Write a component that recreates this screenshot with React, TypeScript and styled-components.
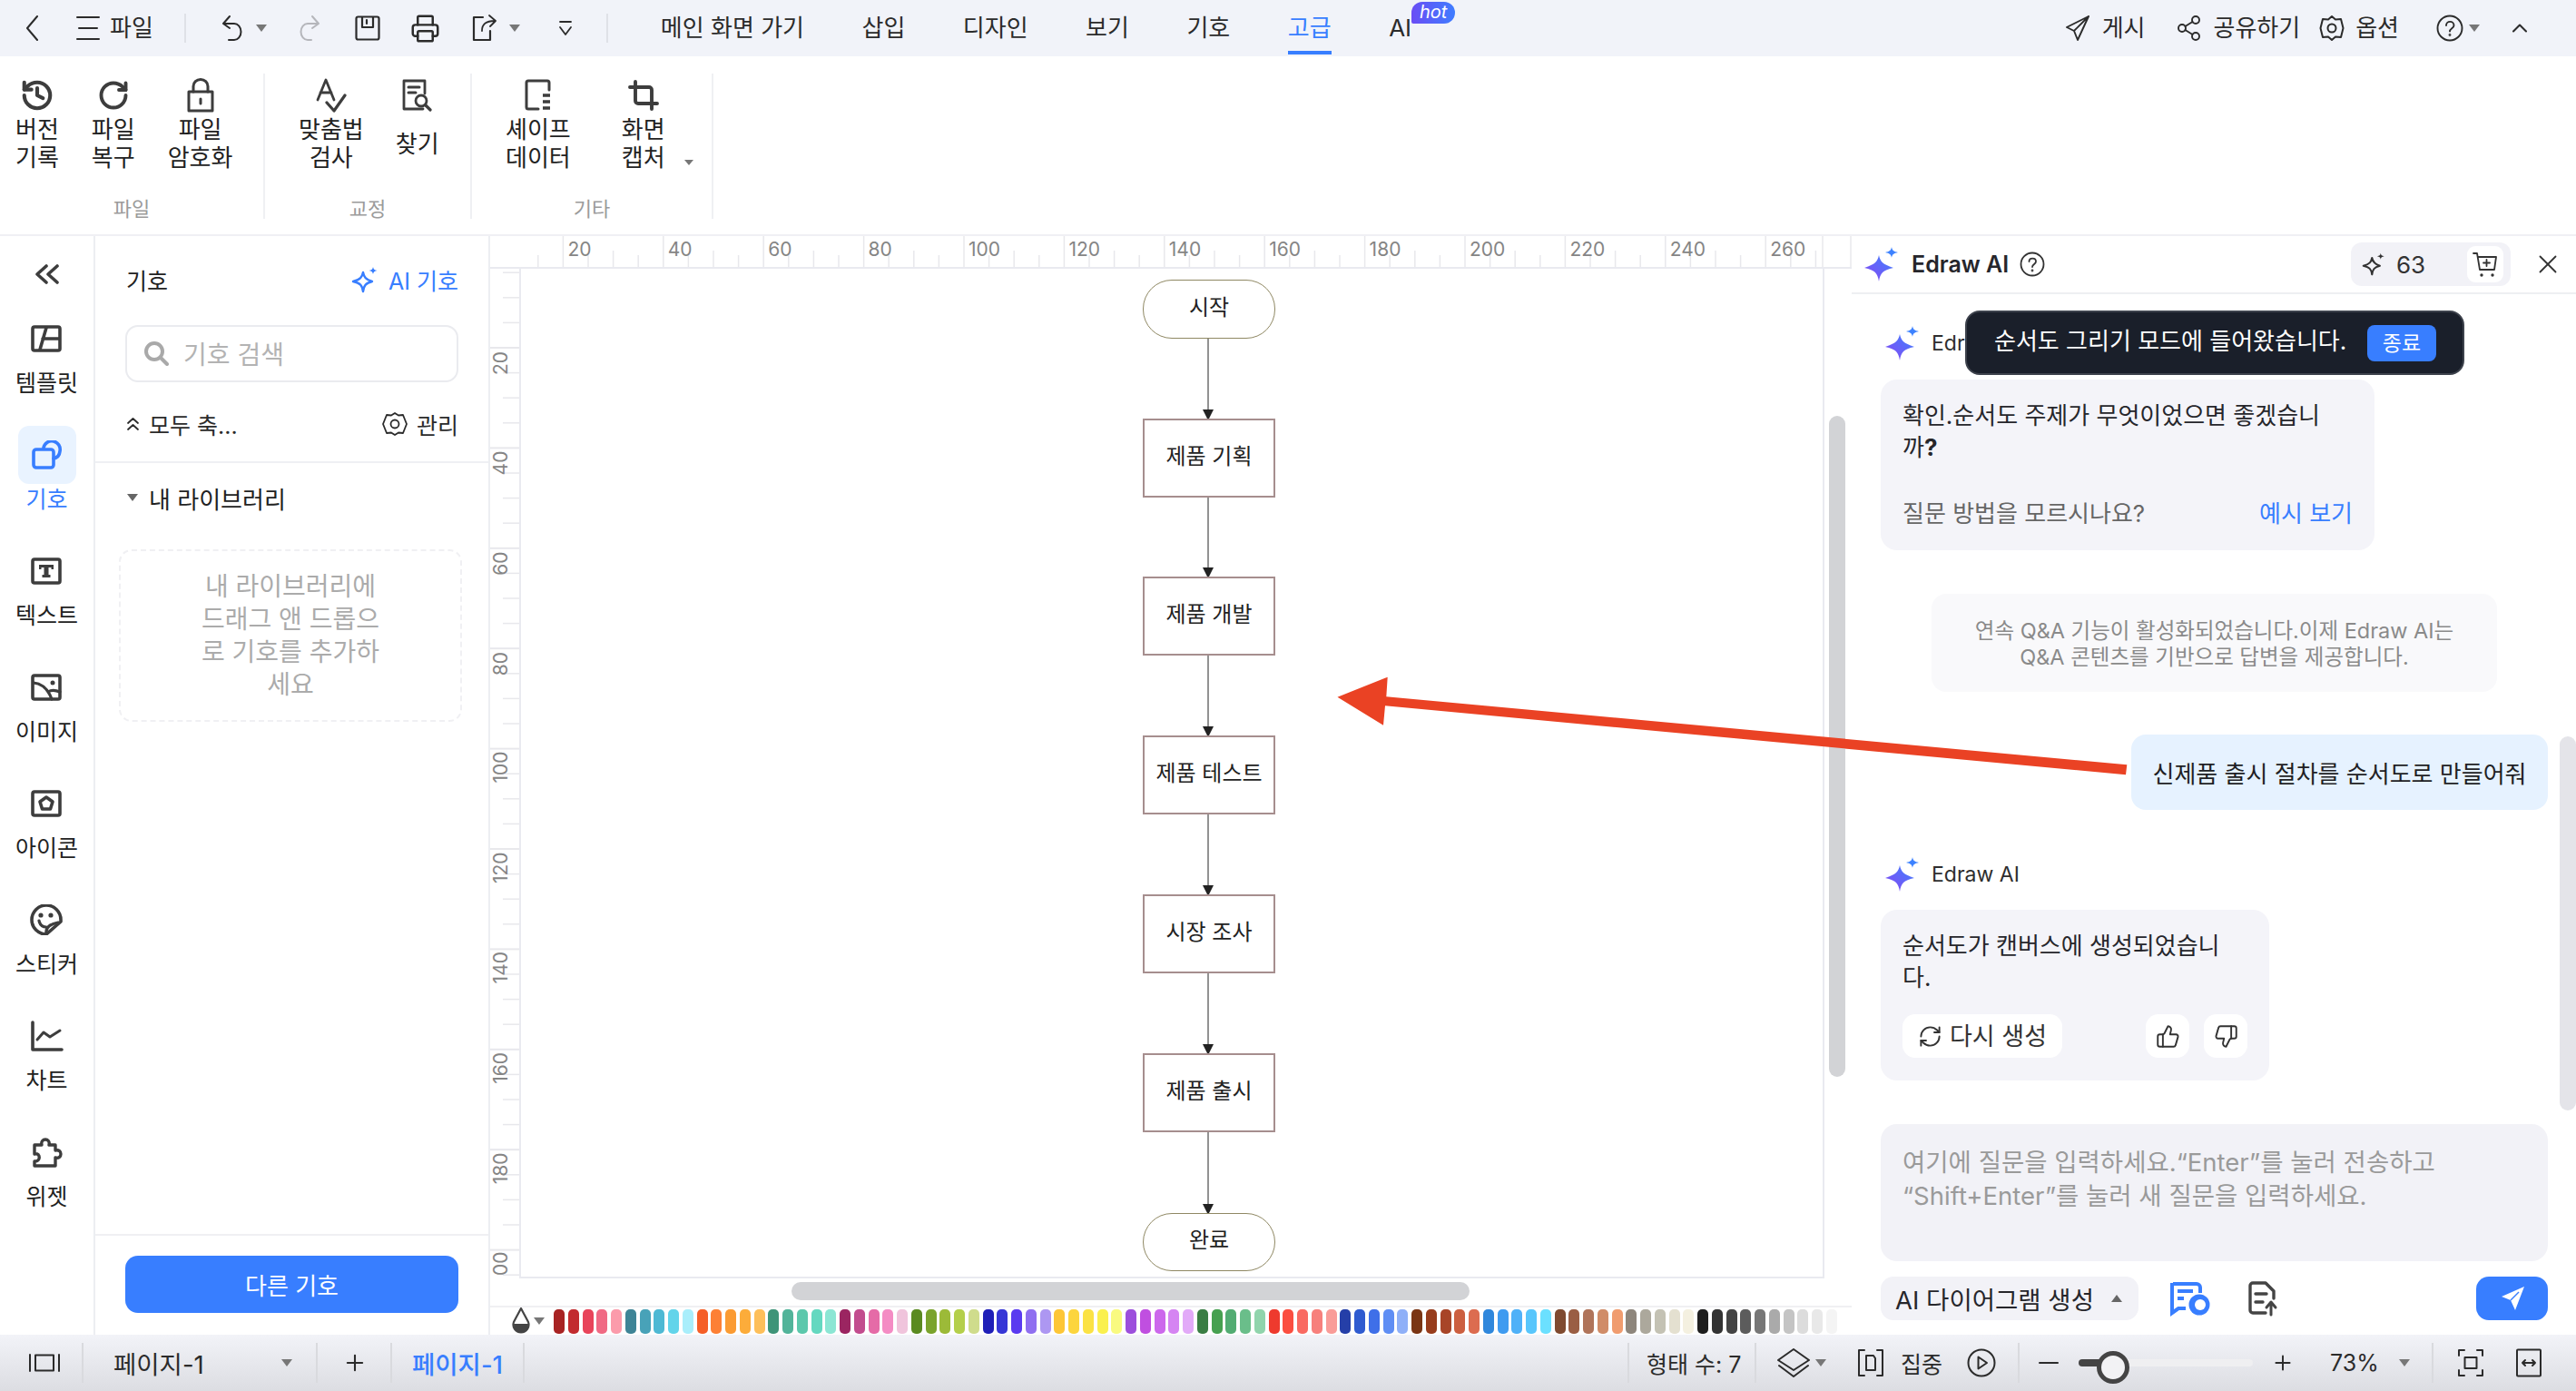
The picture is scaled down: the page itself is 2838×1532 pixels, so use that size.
import React from 'react'
import styled, { createGlobalStyle } from 'styled-components'
import { ChevronUp, Crop, History, Plus, Printer, RefreshCw, RotateCw, ThumbsDown, ThumbsUp, X } from 'lucide-react'

const GlobalStyle = createGlobalStyle`
  html, body {
    margin: 0;
    padding: 0;
    background: #fff;
  }
  body {
    font-family: Inter, "Noto Sans CJK KR", "Noto Sans", sans-serif;
    color: #222;
  }
  * {
    box-sizing: border-box;
  }
`

const Page = styled.div`
  position: relative;
  width: 2838px;
  height: 1532px;
  overflow: hidden;
  display: flex;
  flex-direction: column;
`

/* top menu */
const TopBar = styled.div`
  height: 62px;
  flex: none;
  display: flex;
  align-items: center;
  background: #f1f3f9;
  padding-left: 27px;
  color: #2b2b2b;
`

const TopSlot = styled.span<{ $ml?: number; $color?: string }>`
  display: inline-flex;
  align-items: center;
  margin-left: ${({ $ml }) => $ml || 0}px;
  color: ${({ $color }) => $color || 'inherit'};
  font-size: 26px;
  line-height: 32px;
  white-space: nowrap;
`

const TopSep = styled.span<{ $ml: number }>`
  width: 2px;
  height: 32px;
  margin-left: ${({ $ml }) => $ml}px;
  background: #dfe1e7;
`

const Caret = styled.span<{ $ml?: number; $up?: boolean; $color?: string }>`
  display: inline-block;
  flex: none;
  width: 0;
  height: 0;
  margin-left: ${({ $ml }) => $ml || 0}px;
  border-left: 6px solid transparent;
  border-right: 6px solid transparent;
  ${({ $up, $color }) =>
    $up ? `border-bottom: 8px solid ${$color || '#777'};` : `border-top: 8px solid ${$color || '#777'};`}
`

const NavTabs = styled.div`
  display: flex;
  gap: 63.5px;
  margin-left: 58px;
`

const NavTab = styled.div<{ $active?: boolean }>`
  position: relative;
  font-size: 26px;
  line-height: 62px;
  height: 62px;
  white-space: nowrap;
  color: ${({ $active }) => ($active ? '#387eff' : '#2b2b2b')};

  ${({ $active }) =>
    $active &&
    `&::after {
      content: '';
      position: absolute;
      left: 0;
      right: 0;
      bottom: 2px;
      height: 4px;
      background: #387eff;
    }`}
`

const HotBadge = styled.span`
  position: absolute;
  left: 25px;
  top: 2px;
  width: 48px;
  height: 24px;
  border-radius: 12px 12px 12px 2px;
  background: linear-gradient(90deg, #6a4df5, #3f7dff);
  color: #fff;
  font-size: 20px;
  line-height: 22px;
  text-align: center;
  font-style: italic;
`

const TopRight = styled.div`
  margin-left: auto;
  display: flex;
  align-items: center;
  padding-right: 48px;
`

/* ribbon */
const Ribbon = styled.div`
  height: 198px;
  flex: none;
  display: flex;
  background: #fff;
  border-bottom: 2px solid #f0f0f4;
`

const RibbonGroup = styled.div<{ $w: number; $pl: number; $gap: number }>`
  position: relative;
  width: ${({ $w }) => $w}px;
  height: 160px;
  margin-top: 19px;
  padding-left: ${({ $pl }) => $pl}px;
  border-right: 2px solid #eff0f3;
  display: flex;
  gap: ${({ $gap }) => $gap}px;
`

const RibbonItem = styled.div`
  position: relative;
  display: flex;
  flex-direction: column;
  align-items: center;
  padding-top: 6px;
  height: 130px;
  color: #3d3d3d;
`

const RibbonIcon = styled.div`
  width: 40px;
  height: 36px;
  display: flex;
  align-items: center;
  justify-content: center;
`

const RibbonLabel = styled.div`
  margin-top: 4px;
  color: #222;
  font-size: 26px;
  line-height: 31px;
  height: 62px;
  text-align: center;
  white-space: nowrap;
  display: flex;
  align-items: center;
`

const GroupName = styled.div`
  position: absolute;
  left: 0;
  right: 0;
  bottom: -3px;
  text-align: center;
  font-size: 22px;
  line-height: 28px;
  color: #9b9b9b;
`

const CaptureCaret = styled(Caret)`
  position: absolute;
  right: -31px;
  top: 95px;
  border-left-width: 5px;
  border-right-width: 5px;
  border-top-width: 6px;
`

/* main */
const Main = styled.div`
  flex: 1;
  display: flex;
  min-height: 0;
`

const Rail = styled.div`
  width: 105px;
  flex: none;
  border-right: 2px solid #eceef2;
  display: flex;
  flex-direction: column;
  align-items: center;
`

const CollapseBtn = styled.div`
  height: 81px;
  padding-top: 31px;
  color: #3d3d3d;
`

const RailItem = styled.div<{ $active?: boolean }>`
  height: 128px;
  display: flex;
  flex-direction: column;
  align-items: center;
  color: ${({ $active }) => ($active ? '#387eff' : '#3d3d3d')};
`

const RailIcon = styled.div<{ $active?: boolean }>`
  width: 64px;
  height: 64px;
  border-radius: 12px;
  display: flex;
  align-items: center;
  justify-content: center;
  background: ${({ $active }) => ($active ? '#e9f3ff' : 'transparent')};
`

const RailLabel = styled.div<{ $active?: boolean }>`
  font-size: 25px;
  line-height: 34px;
  color: ${({ $active }) => ($active ? '#387eff' : '#222')};
`

const Panel = styled.div`
  width: 435px;
  flex: none;
  display: flex;
  flex-direction: column;
  border-right: 2px solid #eceef2;
`

const PanelHead = styled.div`
  height: 98px;
  flex: none;
  padding: 0 33px 3px 34px;
  display: flex;
  align-items: center;
  justify-content: space-between;
  font-size: 25px;
`

const BlueLink = styled.span`
  display: inline-flex;
  align-items: center;
  gap: 11px;
  color: #387eff;
  font-size: 25px;
`

const SearchBox = styled.div`
  height: 63px;
  flex: none;
  margin: 0 33px 0 33px;
  padding: 0 0 2px 18px;
  border: 2px solid #eaebef;
  border-radius: 14px;
  display: flex;
  align-items: center;
  gap: 16px;
  color: #b3b3b3;
  font-size: 28px;
`

const ToolRow = styled.div`
  height: 89px;
  flex: none;
  padding: 5px 33px 0 34px;
  border-bottom: 2px solid #eff0f3;
  display: flex;
  align-items: center;
  justify-content: space-between;
  font-size: 25px;
`

const ToolSide = styled.span`
  display: inline-flex;
  align-items: center;
  gap: 10px;
  color: #2b2b2b;
`

const LibRow = styled.div`
  height: 82px;
  flex: none;
  padding: 0 0 6px 35px;
  display: flex;
  align-items: center;
  gap: 12px;
  font-size: 26px;
`

const DropZone = styled.div`
  width: 378px;
  height: 190px;
  flex: none;
  margin: 13px 0 0 26px;
  border: 2px dashed #f0f0f3;
  border-radius: 14px;
  display: flex;
  align-items: center;
  justify-content: center;
  text-align: center;
  color: #ababab;
  font-size: 28px;
  line-height: 36px;
`

const PanelFoot = styled.div`
  margin-top: auto;
  height: 111px;
  flex: none;
  padding: 22px 33px 0 33px;
  border-top: 2px solid #f0f0f3;
`

const PrimaryBtn = styled.div`
  height: 63px;
  border-radius: 14px;
  background: #387eff;
  color: #fff;
  font-size: 26px;
  display: flex;
  align-items: center;
  justify-content: center;
`

/* canvas column */
const CanvasCol = styled.div`
  width: 1500px;
  flex: none;
  display: flex;
  flex-direction: column;
`

const RulerTop = styled.div`
  height: 36px;
  flex: none;
  padding-left: 34px;
  border-bottom: 2px solid #e9eaf0;
  background: #fff;
`

const RulerSvg = styled.svg`
  display: block;
`

const WorkRow = styled.div`
  flex: 1;
  min-height: 0;
  display: flex;
`

const RulerLeft = styled.div`
  width: 34px;
  flex: none;
  overflow: hidden;
  border-right: 2px solid #e9eaf0;
`

const Sheet = styled.div`
  position: relative;
  width: 1436px;
  flex: none;
  background: #fff;
  border-right: 2px solid #e9eaf0;
  border-bottom: 2px solid #e9eaf0;
`

const VGutter = styled.div`
  flex: 1;
  padding: 162px 7px 0 5px;
`

const ScrollThumb = styled.div<{ $len: number; $horizontal?: boolean }>`
  background: #d2d3d6;
  border-radius: 10px;
  ${({ $len, $horizontal }) => ($horizontal ? `width: ${$len}px; height: 20px;` : `height: ${$len}px; width: 100%;`)}
`

const HGutter = styled.div`
  height: 30px;
  flex: none;
  padding: 4px 0 0 332px;
`

const Palette = styled.div`
  height: 32px;
  flex: none;
  border-top: 2px solid #f0f0f3;
  display: flex;
  align-items: center;
  padding-left: 23px;
`

const Swatches = styled.div`
  display: flex;
  gap: 3.75px;
  margin-left: 10px;
`

const Swatch = styled.span<{ $c: string }>`
  width: 12px;
  height: 27px;
  border-radius: 5px;
  background: ${({ $c }) => $c};
`

const Node = styled.div<{ $top: number; $h: number; $round?: boolean }>`
  position: absolute;
  left: 685px;
  top: ${({ $top }) => $top}px;
  width: 146px;
  height: ${({ $h }) => $h}px;
  background: #fff;
  display: flex;
  align-items: center;
  justify-content: center;
  padding-bottom: 9px;
  font-size: 24px;
  color: #222;
  border: ${({ $round }) => ($round ? '1.5px solid #8f8863' : '2px solid #a68e8e')};
  border-radius: ${({ $round }) => ($round ? '32px' : '0')};
`

const Wires = styled.svg`
  position: absolute;
  left: 0;
  top: 0;
`

/* AI panel */
const AiPanel = styled.div`
  position: relative;
  flex: 1;
  min-width: 0;
  display: flex;
  flex-direction: column;
`

const AiHead = styled.div`
  height: 64px;
  flex: none;
  border-bottom: 2px solid #eeeff2;
  display: flex;
  align-items: center;
  padding-left: 14px;
`

const AiTitle = styled.span`
  margin-left: 14px;
  font-size: 25px;
  font-weight: 600;
  color: #26262b;
`

const HelpDot = styled.span`
  display: inline-flex;
  margin-left: 12px;
  color: #333;
`

const Credits = styled.div`
  margin-left: auto;
  width: 176px;
  height: 48px;
  border-radius: 12px;
  background: #f2f2f7;
  display: flex;
  align-items: center;
  padding: 0 8px 0 12px;
  font-size: 26px;
  color: #333;
  gap: 12px;
`

const CartBox = styled.span`
  margin-left: auto;
  width: 40px;
  height: 40px;
  border-radius: 9px;
  background: #fff;
  display: flex;
  align-items: center;
  justify-content: center;
`

const CloseBtn = styled.span`
  display: flex;
  margin: 0 14px 0 24px;
  color: #333;
`

const AiBody = styled.div`
  flex: 1;
  min-height: 0;
  padding: 33px 31px 0 32px;
  display: flex;
  flex-direction: column;
`

const ScrollRail = styled.div`
  position: absolute;
  right: 0;
  top: 551px;
  width: 18px;
  height: 412px;
  border-radius: 9px;
  background: #e4e4e9;
`

const AuthorRow = styled.div<{ $mt?: number }>`
  height: 42px;
  flex: none;
  margin-top: ${({ $mt }) => $mt || 0}px;
  display: flex;
  align-items: center;
  gap: 13px;
  padding-left: 5px;
  font-size: 23px;
  color: #2e2e2e;
`

const Bubble = styled.div<{ $w: number; $h: number; $mt: number }>`
  flex: none;
  width: ${({ $w }) => $w}px;
  height: ${({ $h }) => $h}px;
  margin-top: ${({ $mt }) => $mt}px;
  padding: 22px 24px 0;
  border-radius: 18px;
  background: #f4f4f9;
  font-size: 26px;
  line-height: 35px;
  color: #26262b;
`

const HintRow = styled.div`
  margin-top: 38px;
  display: flex;
  justify-content: space-between;
  color: #666;
`

const Anchor = styled.span`
  color: #387eff;
`

const Notice = styled.div`
  width: 623px;
  height: 108px;
  flex: none;
  margin: 48px 0 0 56px;
  border-radius: 16px;
  background: #f9f9fb;
  color: #8a8a8a;
  font-size: 23.5px;
  line-height: 29px;
  text-align: center;
  padding-top: 26px;
  white-space: nowrap;
`

const UserBubble = styled.div`
  width: 459px;
  height: 83px;
  flex: none;
  margin: 47px 0 0 276px;
  border-radius: 16px;
  background: #e6f2ff;
  display: flex;
  align-items: center;
  justify-content: center;
  font-size: 26px;
  color: #1f1f24;
  white-space: nowrap;
`

const ReplyActions = styled.div`
  margin-top: 23px;
  display: flex;
  gap: 16px;
`

const ActionBtn = styled.span<{ $w: number; $auto?: boolean }>`
  width: ${({ $w }) => $w}px;
  height: 48px;
  margin-left: ${({ $auto }) => ($auto ? 'auto' : '0')};
  border-radius: 14px;
  background: #fff;
  display: inline-flex;
  align-items: center;
  justify-content: center;
  gap: 8px;
  font-size: 27px;
  color: #333;
  white-space: nowrap;
`

const AskBox = styled.div`
  flex: none;
  width: 735px;
  height: 151px;
  margin-top: 48px;
  padding: 24px 24px 0;
  border-radius: 18px;
  background: #f2f2f7;
  color: #9a9a9a;
  font-size: 27.5px;
  line-height: 37px;
  white-space: nowrap;
`

const AskTools = styled.div`
  flex: none;
  height: 48px;
  margin-top: 17px;
  display: flex;
  align-items: center;
`

const ModePicker = styled.div`
  width: 284px;
  height: 48px;
  border-radius: 14px;
  background: #f2f2f7;
  display: flex;
  align-items: center;
  padding-left: 16px;
  gap: 19px;
  font-size: 27.5px;
  color: #26262b;
  white-space: nowrap;
`

const AskIcon = styled.span<{ $ml: number }>`
  display: flex;
  margin-left: ${({ $ml }) => $ml}px;
`

const SendBtn = styled.span`
  margin-left: auto;
  width: 79px;
  height: 48px;
  border-radius: 14px;
  background: #387eff;
  display: flex;
  align-items: center;
  justify-content: center;
`

const Toast = styled.div`
  position: absolute;
  left: 125px;
  top: 82px;
  width: 550px;
  height: 71px;
  border-radius: 16px;
  border: 2px solid #3d424c;
  background: #1a1f2a;
  color: #fff;
  display: flex;
  align-items: center;
  padding-left: 30px;
  font-size: 26px;
  white-space: nowrap;
  line-height: 30px;
`

const ToastText = styled.span`
  margin-bottom: 4px;
`

const ToastBtn = styled.span`
  margin-left: auto;
  margin-right: 29px;
  width: 76px;
  height: 40px;
  border-radius: 8px;
  background: #387eff;
  font-size: 23px;
  display: flex;
  align-items: center;
  justify-content: center;
`

const Callout = styled.svg`
  position: absolute;
  left: 0;
  top: 0;
  pointer-events: none;
`

/* status bar */
const StatusBar = styled.div`
  height: 62px;
  flex: none;
  display: flex;
  align-items: center;
  background: linear-gradient(180deg, #f2f3f8, #dcdde2);
  color: #2b2b2b;
  font-size: 25px;
`

const StatusSep = styled.span<{ $ml: number }>`
  width: 2px;
  height: 44px;
  margin-left: ${({ $ml }) => $ml}px;
  background: #d9dade;
`

const StatusItem = styled.span<{ $ml: number; $blue?: boolean; $page?: boolean; $w?: number }>`
  display: inline-flex;
  align-items: center;
  margin-left: ${({ $ml }) => $ml}px;
  white-space: nowrap;
  ${({ $w }) => ($w ? `width: ${$w}px;` : '')}
  ${({ $page }) => ($page ? 'font-size: 27.5px;' : '')}
  font-weight: ${({ $blue }) => ($blue ? 500 : 400)};
  color: ${({ $blue }) => ($blue ? '#387eff' : 'inherit')};
`

const ZoomTrack = styled.span`
  position: relative;
  width: 192px;
  height: 8px;
  margin-left: 22px;
  border-radius: 4px;
  background: #efeff1;

  &::before {
    content: '';
    position: absolute;
    left: 0;
    top: 0;
    width: 26px;
    height: 8px;
    border-radius: 4px;
    background: #444;
  }
  &::after {
    content: '';
    position: absolute;
    left: 20px;
    top: -9px;
    width: 26px;
    height: 26px;
    border-radius: 50%;
    background: #f2f2f4;
    border: 5px solid #444;
  }
`

const line = { fill: 'none', stroke: 'currentColor', strokeLinecap: 'round', strokeLinejoin: 'round' } as const

const Sparkle = ({ size = 38 }: { size?: number }) => {
  const id = React.useId()
  return (
    <svg width={size} height={size} viewBox="0 0 38 38">
      <defs>
        <linearGradient id={id} x1="0" y1="1" x2="1" y2="0">
          <stop offset="0" stopColor="#8a45f2" />
          <stop offset="1" stopColor="#3d82ff" />
        </linearGradient>
      </defs>
      <path d="M16 9C17.500 16 20 19 32 23C20 25.500 17.500 29 16 38C14.500 29 12 25.500 0 23C12 19 14.500 16 16 9Z" fill={`url(#${id})`} />
      <path d="M30 0C30.600 3.500 32 5 37 6C32 7 30.600 8.500 30 12C29.400 8.500 28 7 23 6C28 5 29.400 3.500 30 0Z" fill="#3d82ff" />
    </svg>
  )
}

const SparkleOutline = ({ size = 30, color = '#333' }: { size?: number; color?: string }) => (
  <svg width={size} height={size} viewBox="0 0 30 30" color={color}>
    <path d="M13 7C14 12 16 15 23 17C16 19 14 21 13 28C12 21 10 19 2 17C10 15 12 12 13 7Z" {...line} strokeWidth="2.400" />
    <path d="M24 1C24.400 3.500 25.500 4.500 28.500 5C25.500 5.500 24.400 6.500 24 9C23.600 6.500 22.500 5.500 19.500 5C22.500 4.500 23.600 3.500 24 1Z" fill="currentColor" />
  </svg>
)

const paletteGroups = [
  ['#a82323', '#c22b2f', '#e8445a', '#f06a84', '#fb9bab'],
  ['#3e8496', '#48a2b8', '#4eb9d4', '#62d4ea', '#a9eefb'],
  ['#f55f28', '#fd8035', '#fb9b33', '#fcac3a', '#fdbf5a'],
  ['#3e9478', '#52b49a', '#5cc8ac', '#64d8c0', '#8ce6d4'],
  ['#9b2561', '#c24c8e', '#e56ba7', '#f48cc4', '#f0c4dc'],
  ['#5a8a20', '#7aa32c', '#9cba38', '#b4cf4a', '#cfdc8c'],
  ['#1f1fb8', '#3636d6', '#5a3af0', '#8f6ff0', '#ad97f2'],
  ['#fdc637', '#fcd53e', '#fbe244', '#faf04e', '#f9fa80'],
  ['#9c4fdc', '#c04fe0', '#cc68ec', '#d584f2', '#e2aaf8'],
  ['#3a7d44', '#46a050', '#52ac72', '#6abe8a', '#90d4ac'],
  ['#ee3a2e', '#fb4e40', '#f96a62', '#f7807c', '#f99c98'],
  ['#253fa8', '#2f5bd0', '#3f6fe8', '#5f8ef4', '#8fb0f8'],
  ['#7a3514', '#973c1c', '#a84528', '#cc5f40', '#dc6c50'],
  ['#2f87dc', '#3f9bf0', '#4fb1f8', '#58c6fc', '#6be0ff'],
  ['#7f4a30', '#9a5e44', '#b0745a', '#d08c68', '#f09c6f'],
  ['#8e867c', '#aca89c', '#c4c2b4', '#e4e0d0', '#f4f0e0'],
  ['#1e1e1e', '#333333', '#444444', '#5c5c5c', '#777777'],
  ['#aaaaaa', '#c4c4c4', '#dcdcdc', '#e8e8e8', '#f4f4f4'],
]

const railItems = [
  {
    label: '템플릿',
    icon: (
      <svg width="34" height="30" viewBox="0 0 34 30" {...line} strokeWidth="3.600">
        <rect x="2" y="2" width="30" height="26" rx="2" />
        <path d="M10 27L17 3M13 15H31" />
      </svg>
    ),
  },
  {
    label: '기호',
    active: true,
    icon: (
      <svg width="34" height="32" viewBox="0 0 34 32" {...line} strokeWidth="3.600">
        <path d="M13 8A9 9 0 0 1 31 12A9 9 0 0 1 24 20" />
        <rect x="2" y="10" width="22" height="20" rx="3" />
      </svg>
    ),
  },
  {
    label: '텍스트',
    icon: (
      <svg width="34" height="30" viewBox="0 0 34 30">
        <rect x="2" y="2" width="30" height="26" rx="2" {...line} strokeWidth="3.600" />
        <path d="M9 8H25V13H22.500V11H19.500V19H21.500V22H12.500V19H14.500V11H11.500V13H9Z" fill="currentColor" />
      </svg>
    ),
  },
  {
    label: '이미지',
    icon: (
      <svg width="34" height="30" viewBox="0 0 34 30">
        <path d="M3 10C12 11 19 17 23 28M19 20C22 18 27 18 32 20" {...line} strokeWidth="3.200" />
        <rect x="2" y="2" width="30" height="26" rx="2" {...line} strokeWidth="3.600" />
        <circle cx="24" cy="10" r="2.500" fill="currentColor" />
      </svg>
    ),
  },
  {
    label: '아이콘',
    icon: (
      <svg width="34" height="30" viewBox="0 0 34 30" {...line} strokeWidth="3.600">
        <rect x="2" y="2" width="30" height="26" rx="2" />
        <path d="M17 8L24 13L21.500 21H12.500L10 13Z" />
      </svg>
    ),
  },
  {
    label: '스티커',
    icon: (
      <svg width="36" height="34" viewBox="0 0 36 34">
        <path d="M34 17A16 16 0 1 0 18 33L34 19Z" {...line} strokeWidth="3.600" />
        <path d="M10 18C11 23 14 25 18 25M18 32C17 26 21 22 31 20" {...line} strokeWidth="3.200" />
        <circle cx="12" cy="12" r="2.600" fill="currentColor" />
        <circle cx="23" cy="12" r="2.600" fill="currentColor" />
      </svg>
    ),
  },
  {
    label: '차트',
    icon: (
      <svg width="36" height="34" viewBox="0 0 36 34" {...line} strokeWidth="3.600">
        <path d="M2 2V32H34" />
        <path d="M7 21L14 13L21 18L32 11" strokeWidth="3" />
      </svg>
    ),
  },
  {
    label: '위젯',
    icon: (
      <svg width="36" height="34" viewBox="0 0 36 34" {...line} strokeWidth="3.400">
        <path d="M4 9H12C10 1 22 1 20 9H27V15C35 13 35 25 27 23V32H4V27C11 28 11 17 4 19Z" />
      </svg>
    ),
  },
]

const nodeSpec = [
  { text: '시작', top: 12, h: 65, round: true },
  { text: '제품 기획', top: 165, h: 87 },
  { text: '제품 개발', top: 339, h: 87 },
  { text: '제품 테스트', top: 514, h: 87 },
  { text: '시장 조사', top: 689, h: 87 },
  { text: '제품 출시', top: 864, h: 87 },
  { text: '완료', top: 1040, h: 64, round: true },
]

const TICK = 5.52
const range = (n: number) => Array.from({ length: n }, (_, i) => i)

const HRuler = () => {
  const zero = 510 - 574
  return (
    <RulerSvg width="1466" height="34">
      {range(55).map((i) => {
        const x = zero + i * 5 * TICK
        const major = i % 4 === 0
        const h = major ? 34 : i % 2 === 0 ? 18 : 13
        if (x > 1434) return null
        return <line key={i} x1={x} x2={x} y1={34 - h} y2={34} stroke="#e8e8ec" strokeWidth="1.500" />
      })}
      {range(14)
        .slice(1)
        .map((i) => (
          <text key={i} x={zero + i * 20 * TICK + 5} y={22} fontSize="21" fill="#858585" fontFamily="Inter, sans-serif">
            {i * 20}
          </text>
        ))}
      <line x1="1434" x2="1434" y1="0" y2="34" stroke="#e8e8ec" strokeWidth="1.500" />
      <line x1="1465" x2="1465" y1="0" y2="34" stroke="#e8e8ec" strokeWidth="1.500" />
    </RulerSvg>
  )
}

const VRuler = () => {
  const zero = 272.600 - 296
  return (
    <RulerSvg width="32" height="1112">
      {range(44).map((i) => {
        const y = zero + i * 5 * TICK
        const major = i % 4 === 0
        return (
          <line key={i} x1={major ? 0 : 14} x2={32} y1={y} y2={y} stroke="#e8e8ec" strokeWidth={major ? 2 : 1.500} />
        )
      })}
      {range(11)
        .slice(1)
        .map((i) => {
          // the last label is cut by the end of the ruler, only its zeros show
          const y = i === 10 ? 1109 : zero + i * 20 * TICK + 30 + (i > 4 ? 8 : 0)
          return (
            <text
              key={i}
              transform={`translate(19 ${y}) rotate(-90)`}
              fontSize="21"
              fill="#858585"
              fontFamily="Inter, sans-serif"
            >
              {i === 10 ? '00' : i * 20}
            </text>
          )
        })}
    </RulerSvg>
  )
}

export default function App() {
  return (
    <Page>
      <GlobalStyle />
      <TopBar>
        <TopSlot>
          <svg width="16" height="28" viewBox="0 0 16 28" {...line} strokeWidth="2">
            <path d="M14 1L3 14L14 27" />
          </svg>
        </TopSlot>
        <TopSlot $ml={41}>
          <svg width="26" height="26" viewBox="0 0 26 26" {...line} strokeWidth="2">
            <path d="M1 1H25M3 13H23M1 25H25" />
          </svg>
        </TopSlot>
        <TopSlot $ml={11}>파일</TopSlot>
        <TopSep $ml={34} />
        <TopSlot $ml={38}>
          <svg width="26" height="30" viewBox="0 0 26 30" {...line} strokeWidth="2">
            <path d="M10 2L3 10L10 15M3 10H15A7.500 9 0 0 1 15 28H9" />
          </svg>
        </TopSlot>
        <Caret $ml={13} />
        <TopSlot $ml={34} $color="#b5b6bb">
          <svg width="26" height="30" viewBox="0 0 26 30" {...line} strokeWidth="2">
            <path d="M16 2L23 10L16 15M23 10H11A7.500 9 0 0 0 11 28H15" />
          </svg>
        </TopSlot>
        <TopSlot $ml={37}>
          <svg width="28" height="28" viewBox="0 0 28 28" {...line} strokeWidth="2.200">
            <rect x="1.500" y="1.500" width="25" height="25" rx="2" />
            <path d="M8 2V13H20V2" />
            <path d="M13 5V9" />
          </svg>
        </TopSlot>
        <TopSlot $ml={33}>
          <Printer size={33} strokeWidth={1.800} />
        </TopSlot>
        <TopSlot $ml={34}>
          <svg width="30" height="30" viewBox="0 0 30 30" {...line} strokeWidth="2.200">
            <path d="M13 3H3V28H21V18" />
            <path d="M12 18C12 11 16 7 26 7M20 1L27 7L21 13" strokeWidth="1.800" />
          </svg>
        </TopSlot>
        <Caret $ml={12} />
        <TopSlot $ml={42}>
          <svg width="16" height="18" viewBox="0 0 16 18" {...line} strokeWidth="1.800">
            <path d="M2 2H14M2 8L8 16L14 8" />
          </svg>
        </TopSlot>
        <TopSep $ml={37} />
        <NavTabs>
          <NavTab>메인 화면 가기</NavTab>
          <NavTab>삽입</NavTab>
          <NavTab>디자인</NavTab>
          <NavTab>보기</NavTab>
          <NavTab>기호</NavTab>
          <NavTab $active>고급</NavTab>
          <NavTab>
            AI
            <HotBadge>hot</HotBadge>
          </NavTab>
        </NavTabs>
        <TopRight>
          <TopSlot>
            <svg width="28" height="30" viewBox="0 0 28 30" {...line} strokeWidth="1.900">
              <path d="M26 2L2 14L10 18L14 28ZM26 2L10 18" />
            </svg>
          </TopSlot>
          <TopSlot $ml={13}>게시</TopSlot>
          <TopSlot $ml={35}>
            <svg width="28" height="30" viewBox="0 0 28 30" {...line} strokeWidth="1.900">
              <circle cx="6" cy="15" r="4" />
              <circle cx="21" cy="6" r="4" />
              <circle cx="21" cy="24" r="4" />
              <path d="M9.500 13L17.500 8M9.500 17L17.500 22" />
            </svg>
          </TopSlot>
          <TopSlot $ml={12}>공유하기</TopSlot>
          <TopSlot $ml={21}>
            <svg width="28" height="30" viewBox="0 0 28 30" {...line} strokeWidth="2">
              <path d="M14 2L18 5.500L24 5L25.500 11L26.500 15L25.500 19L24 25L18 24.500L14 28L10 24.500L4 25L2.500 19L1.500 15L2.500 11L4 5L10 5.500Z" />
              <circle cx="14" cy="15" r="4.500" />
            </svg>
          </TopSlot>
          <TopSlot $ml={12}>옵션</TopSlot>
          <TopSlot $ml={41}>
            <svg width="30" height="30" viewBox="0 0 30 30" {...line} strokeWidth="1.900">
              <circle cx="15" cy="15" r="13.500" />
              <path d="M11 12C11 6.500 19.500 6.500 19.500 12C19.500 15 15 15.500 15 18.500" />
              <circle cx="15" cy="22.500" r="0.500" />
            </svg>
          </TopSlot>
          <Caret $ml={6} />
          <TopSlot $ml={30}>
            <ChevronUp size={28} strokeWidth={1.800} />
          </TopSlot>
        </TopRight>
      </TopBar>

      <Ribbon>
        <RibbonGroup $w={292} $pl={17} $gap={36}>
          <RibbonItem>
            <RibbonIcon>
              <History size={38} strokeWidth={2.600} />
            </RibbonIcon>
            <RibbonLabel>
              버전
              <br />
              기록
            </RibbonLabel>
          </RibbonItem>
          <RibbonItem>
            <RibbonIcon>
              <RotateCw size={36} strokeWidth={2.600} />
            </RibbonIcon>
            <RibbonLabel>
              파일
              <br />
              복구
            </RibbonLabel>
          </RibbonItem>
          <RibbonItem>
            <RibbonIcon>
              <svg width="32" height="38" viewBox="0 0 32 38" {...line} strokeWidth="3">
                <rect x="3" y="15" width="26" height="21" />
                <path d="M8 15V9A8 7.500 0 0 1 24 9V15M16 23V28" />
              </svg>
            </RibbonIcon>
            <RibbonLabel>
              파일
              <br />
              암호화
            </RibbonLabel>
          </RibbonItem>
          <GroupName>파일</GroupName>
        </RibbonGroup>
        <RibbonGroup $w={228} $pl={37} $gap={35}>
          <RibbonItem>
            <RibbonIcon>
              <svg width="36" height="38" viewBox="0 0 36 38" {...line} strokeWidth="2.800">
                <path d="M3 24L12 2L21 24M6 16H18" />
                <path d="M13 27L21 36L33 19" strokeWidth="3.200" />
              </svg>
            </RibbonIcon>
            <RibbonLabel>
              맞춤법
              <br />
              검사
            </RibbonLabel>
          </RibbonItem>
          <RibbonItem>
            <RibbonIcon>
              <svg width="36" height="36" viewBox="0 0 36 36" {...line} strokeWidth="2.800">
                <path d="M24 33H3V2H26V16" />
                <path d="M8 9H20M8 15H16" strokeWidth="3" />
                <circle cx="22" cy="24" r="6" />
                <path d="M27 29L32 34" strokeWidth="3.200" />
              </svg>
            </RibbonIcon>
            <RibbonLabel>찾기</RibbonLabel>
          </RibbonItem>
          <GroupName>교정</GroupName>
        </RibbonGroup>
        <RibbonGroup $w={266} $pl={37} $gap={56}>
          <RibbonItem>
            <RibbonIcon>
              <svg width="32" height="36" viewBox="0 0 32 36" {...line} strokeWidth="3">
                <path d="M16 33H5A2 2 0 0 1 3 31V4A2 2 0 0 1 5 2H26A2 2 0 0 1 28 4V12" />
                <path d="M21 18H29M21 25H29M21 32H29" strokeWidth="3.600" strokeLinecap="butt" />
              </svg>
            </RibbonIcon>
            <RibbonLabel>
              셰이프
              <br />
              데이터
            </RibbonLabel>
          </RibbonItem>
          <RibbonItem>
            <RibbonIcon>
              <Crop size={36} strokeWidth={2.600} />
            </RibbonIcon>
            <RibbonLabel>
              화면
              <br />
              캡처
            </RibbonLabel>
            <CaptureCaret />
          </RibbonItem>
          <GroupName>기타</GroupName>
        </RibbonGroup>
      </Ribbon>

      <Main>
        <Rail>
          <CollapseBtn>
            <svg width="28" height="22" viewBox="0 0 28 22" {...line} strokeWidth="3.600">
              <path d="M13 2L3 11L13 20M25 2L15 11L25 20" />
            </svg>
          </CollapseBtn>
          {railItems.map((item) => (
            <RailItem key={item.label} $active={item.active}>
              <RailIcon $active={item.active}>{item.icon}</RailIcon>
              <RailLabel $active={item.active}>{item.label}</RailLabel>
            </RailItem>
          ))}
        </Rail>

        <Panel>
          <PanelHead>
            <span>기호</span>
            <BlueLink>
              <SparkleOutline color="#387eff" />
              AI 기호
            </BlueLink>
          </PanelHead>
          <SearchBox>
            <svg width="28" height="28" viewBox="0 0 28 28" fill="none" stroke="#a9a9a9" strokeWidth="4" strokeLinecap="round">
              <circle cx="12" cy="12" r="9" />
              <path d="M19 19L26 26" />
            </svg>
            기호 검색
          </SearchBox>
          <ToolRow>
            <ToolSide>
              <svg width="15" height="16" viewBox="0 0 15 16" {...line} strokeWidth="1.800">
                <path d="M2 7L7.500 2L13 7M2 14L7.500 9L13 14" />
              </svg>
              모두 축...
            </ToolSide>
            <ToolSide>
              <svg width="28" height="28" viewBox="0 0 28 28" {...line} strokeWidth="1.800">
                <path d="M14 2L18 4.500L23 4L25 9L27 14L25 19L23 24L18 23.500L14 26L10 23.500L5 24L3 19L1 14L3 9L5 4L10 4.500Z" />
                <circle cx="14" cy="14" r="4.500" />
              </svg>
              관리
            </ToolSide>
          </ToolRow>
          <LibRow>
            <Caret $color="#666" />
            내 라이브러리
          </LibRow>
          <DropZone>
            <div>
              내 라이브러리에
              <br />
              드래그 앤 드롭으
              <br />
              로 기호를 추가하
              <br />
              세요
            </div>
          </DropZone>
          <PanelFoot>
            <PrimaryBtn>다른 기호</PrimaryBtn>
          </PanelFoot>
        </Panel>

        <CanvasCol>
          <RulerTop>
            <HRuler />
          </RulerTop>
          <WorkRow>
            <RulerLeft>
              <VRuler />
            </RulerLeft>
            <Sheet>
              <Wires width="1434" height="1110">
                {nodeSpec.slice(0, -1).map((n, i) => {
                  const y1 = n.top + n.h
                  const y2 = nodeSpec[i + 1].top
                  return (
                    <g key={n.text}>
                      <line x1="757" x2="757" y1={y1} y2={y2 - 10} stroke="#777" strokeWidth="1.600" />
                      <path d={`M751 ${y2 - 10}H763L757 ${y2 + 2}Z`} fill="#222" />
                    </g>
                  )
                })}
              </Wires>
              {nodeSpec.map((n) => (
                <Node key={n.text} $top={n.top} $h={n.h} $round={n.round}>
                  {n.text}
                </Node>
              ))}
            </Sheet>
            <VGutter>
              <ScrollThumb $len={728} />
            </VGutter>
          </WorkRow>
          <HGutter>
            <ScrollThumb $len={747} $horizontal />
          </HGutter>
          <Palette>
            <svg width="22" height="30" viewBox="0 0 22 30">
              <path d="M11 1L19 16A8.500 8.500 0 1 1 3 16Z" fill="none" stroke="#444" strokeWidth="2.200" strokeLinejoin="round" />
              <path d="M3 18H19C19 25 15 28 11 28C7 28 3 25 3 18Z" fill="#444" />
            </svg>
            <Caret $ml={3} />
            <Swatches>
              {paletteGroups.flat().map((c, i) => (
                <Swatch key={i} $c={c} />
              ))}
            </Swatches>
          </Palette>
        </CanvasCol>

        <AiPanel>
          <AiHead>
            <Sparkle />
            <AiTitle>Edraw AI</AiTitle>
            <HelpDot>
              <svg width="28" height="28" viewBox="0 0 28 28" {...line} strokeWidth="1.800">
                <circle cx="14" cy="14" r="12.500" />
                <path d="M10.500 11C10.500 6.500 18 6.500 18 11C18 14 14 14 14 17" />
                <circle cx="14" cy="21" r="0.500" />
              </svg>
            </HelpDot>
            <Credits>
              <SparkleOutline size={26} />
              63
              <CartBox>
                <svg width="28" height="30" viewBox="0 0 28 30" {...line} strokeWidth="1.800" color="#333">
                  <path d="M1 3H5L8 21H24L26 7H6" />
                  <path d="M15.500 10V17M12 13.500H19" />
                  <circle cx="10" cy="27" r="0.800" />
                  <circle cx="22" cy="27" r="0.800" />
                </svg>
              </CartBox>
            </Credits>
            <CloseBtn>
              <X size={34} strokeWidth={1.300} />
            </CloseBtn>
          </AiHead>
          <AiBody>
            <AuthorRow>
              <Sparkle />
              Edraw AI
            </AuthorRow>
            <Bubble $w={544} $h={188} $mt={19}>
              확인.순서도 주제가 무엇이었으면 좋겠습니
              <br />
              까<b>?</b>
              <HintRow>
                <span>질문 방법을 모르시나요?</span>
                <Anchor>예시 보기</Anchor>
              </HintRow>
            </Bubble>
            <Notice>
              연속 Q&amp;A 기능이 활성화되었습니다.이제 Edraw AI는
              <br />
              Q&amp;A 콘텐츠를 기반으로 답변을 제공합니다.
            </Notice>
            <UserBubble>신제품 출시 절차를 순서도로 만들어줘</UserBubble>
            <AuthorRow $mt={50}>
              <Sparkle />
              Edraw AI
            </AuthorRow>
            <Bubble $w={428} $h={188} $mt={18}>
              순서도가 캔버스에 생성되었습니
              <br />
              다.
              <ReplyActions>
                <ActionBtn $w={176}>
                  <RefreshCw size={27} strokeWidth={1.700} />
                  다시 생성
                </ActionBtn>
                <ActionBtn $w={48} $auto>
                  <ThumbsUp size={27} strokeWidth={1.700} />
                </ActionBtn>
                <ActionBtn $w={48}>
                  <ThumbsDown size={27} strokeWidth={1.700} />
                </ActionBtn>
              </ReplyActions>
            </Bubble>
            <AskBox>
              여기에 질문을 입력하세요.“Enter”를 눌러 전송하고
              <br />
              “Shift+Enter”를 눌러 새 질문을 입력하세요.
            </AskBox>
            <AskTools>
              <ModePicker>
                AI 다이어그램 생성
                <Caret $up $color="#666" />
              </ModePicker>
              <AskIcon $ml={34}>
                <svg width="46" height="40" viewBox="0 0 46 40">
                  <path d="M4 4H30C32 4 34 6 34 8V14" fill="none" stroke="#387eff" strokeWidth="4" />
                  <path d="M3 3V36L10 31H18" fill="none" stroke="#387eff" strokeWidth="4" />
                  <path d="M9 12H26M9 20H16" stroke="#387eff" strokeWidth="4" />
                  <circle cx="33" cy="27" r="11.500" fill="#387eff" />
                  <circle cx="34" cy="27" r="6" fill="#fff" />
                </svg>
              </AskIcon>
              <AskIcon $ml={40}>
                <svg width="34" height="40" viewBox="0 0 34 40" {...line} strokeWidth="3.400" color="#444">
                  <path d="M20 36H6A3 3 0 0 1 3 33V6A3 3 0 0 1 6 3H20L29 12V20" />
                  <path d="M9 15H21M9 24H17" />
                  <path d="M26 38V25M21 30L26 24L31 30" strokeWidth="3" />
                </svg>
              </AskIcon>
              <SendBtn>
                <svg width="30" height="30" viewBox="0 0 30 30">
                  <path d="M28 2L3 13L13 17L18 28Z" fill="#fff" />
                  <path d="M13 17L22 8" stroke="#387eff" strokeWidth="1.500" />
                </svg>
              </SendBtn>
            </AskTools>
          </AiBody>
          <ScrollRail />
          <Toast>
            <ToastText>순서도 그리기 모드에 들어왔습니다.</ToastText>
            <ToastBtn>종료</ToastBtn>
          </Toast>
        </AiPanel>
      </Main>

      <StatusBar>
        <StatusItem $ml={32}>
          <svg width="34" height="20" viewBox="0 0 34 20" {...line} strokeWidth="2">
            <path d="M1 1V19M33 1V19" />
            <rect x="7" y="1.500" width="20" height="17" />
          </svg>
        </StatusItem>
        <StatusSep $ml={24} />
        <StatusItem $ml={33} $page $w={101}>
          페이지-1
        </StatusItem>
        <Caret $ml={84} />
        <StatusSep $ml={26} />
        <StatusItem $ml={27}>
          <Plus size={28} strokeWidth={1.800} />
        </StatusItem>
        <StatusSep $ml={25} />
        <StatusItem $ml={22} $blue $page $w={101}>
          페이지-1
        </StatusItem>
        <StatusSep $ml={21} />
        <StatusSep $ml={1215} />
        <StatusItem $ml={19} $w={103}>
          형태 수: 7
        </StatusItem>
        <StatusSep $ml={16} />
        <StatusItem $ml={22}>
          <svg width="38" height="32" viewBox="0 0 38 32" {...line} strokeWidth="2">
            <path d="M19 1L36 13L19 24L2 13Z" />
            <path d="M3 19L19 31L35 19" />
          </svg>
        </StatusItem>
        <Caret $ml={5} />
        <StatusItem $ml={34}>
          <svg width="30" height="32" viewBox="0 0 30 32" {...line} strokeWidth="2">
            <path d="M8 2H2V30H8M22 2H28V30H22" />
            <path d="M10 8H18L20 11V24H10Z" />
          </svg>
        </StatusItem>
        <StatusItem $ml={18} $w={48}>
          집중
        </StatusItem>
        <StatusItem $ml={25}>
          <svg width="32" height="32" viewBox="0 0 32 32" {...line} strokeWidth="2">
            <circle cx="16" cy="16" r="14.500" />
            <path d="M12.500 9.500L22 16L12.500 22.500Z" />
          </svg>
        </StatusItem>
        <StatusSep $ml={24} />
        <StatusItem $ml={21}>
          <svg width="22" height="4" viewBox="0 0 22 4" {...line} strokeWidth="2">
            <path d="M1 2H21" />
          </svg>
        </StatusItem>
        <ZoomTrack />
        <StatusItem $ml={20}>
          <Plus size={26} strokeWidth={1.800} />
        </StatusItem>
        <StatusItem $ml={39}>73%</StatusItem>
        <Caret $ml={22} />
        <StatusSep $ml={24} />
        <StatusItem $ml={26}>
          <svg width="30" height="32" viewBox="0 0 30 32" {...line} strokeWidth="2">
            <path d="M8 2H2V8M22 2H28V8M8 30H2V24M22 30H28V24" />
            <rect x="8.500" y="10" width="13" height="12" />
          </svg>
        </StatusItem>
        <StatusItem $ml={35}>
          <svg width="28" height="32" viewBox="0 0 28 32" {...line} strokeWidth="2">
            <rect x="1" y="1.500" width="26" height="29" rx="1" />
            <path d="M7 16H21M10 13L7 16L10 19M18 13L21 16L18 19" />
          </svg>
        </StatusItem>
      </StatusBar>

      <Callout width="2838" height="1532">
        <path
          d="M1473.500 767.700L1528.700 745.700L1527.300 767.300L2343.300 842.300L2342 853.300L1526 777.300L1524 798.700Z"
          fill="#ea4224"
        />
      </Callout>
    </Page>
  )
}
